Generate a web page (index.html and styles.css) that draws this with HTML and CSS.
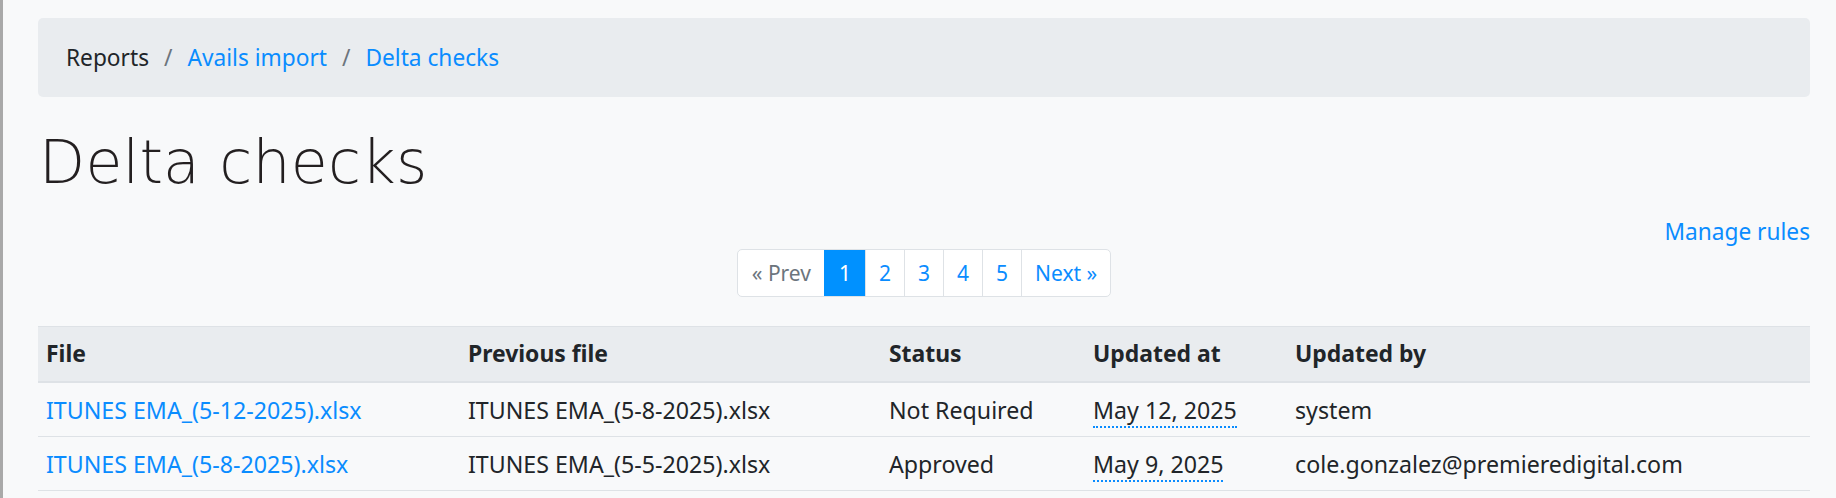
FILE: index.html
```html
<!DOCTYPE html>
<html lang="en">
<head>
<meta charset="utf-8">
<title>Delta checks</title>
<link rel="stylesheet" href="styles.css">
</head>
<body>
<div class="page">
  <nav class="breadcrumb">
    <span class="crumb">Reports</span>
    <a class="crumb" href="#">Avails import</a>
    <a class="crumb" href="#">Delta checks</a>
  </nav>

  <h1 class="title">Delta checks</h1>

  <div class="actions">
    <a href="#" class="action-link">Manage rules</a>
  </div>

  <div class="pager-wrap">
    <ul class="pager">
      <li><span class="pg disabled">« Prev</span></li>
      <li><span class="pg active">1</span></li>
      <li><a class="pg" href="#">2</a></li>
      <li><a class="pg" href="#">3</a></li>
      <li><a class="pg" href="#">4</a></li>
      <li><a class="pg" href="#">5</a></li>
      <li><a class="pg" href="#">Next »</a></li>
    </ul>
  </div>

  <table class="grid">
    <colgroup>
      <col class="c-file"><col class="c-prev"><col class="c-status"><col class="c-at"><col class="c-by">
    </colgroup>
    <thead>
      <tr><th>File</th><th>Previous file</th><th>Status</th><th>Updated at</th><th>Updated by</th></tr>
    </thead>
    <tbody>
      <tr>
        <td><a href="#">ITUNES EMA_(5-12-2025).xlsx</a></td>
        <td>ITUNES EMA_(5-8-2025).xlsx</td>
        <td>Not Required</td>
        <td><span class="date" title="May 12, 2025">May 12, 2025</span></td>
        <td>system</td>
      </tr>
      <tr>
        <td><a href="#">ITUNES EMA_(5-8-2025).xlsx</a></td>
        <td>ITUNES EMA_(5-5-2025).xlsx</td>
        <td>Approved</td>
        <td><span class="date" title="May 9, 2025">May 9, 2025</span></td>
        <td>cole.gonzalez@premieredigital.com</td>
      </tr>
    </tbody>
  </table>
</div>
</body>
</html>
```
FILE: styles.css
```css
html, body {
  margin: 0;
  padding: 0;
}
body {
  background: #f8f9fa;
  color: #212529;
  font-family: "Noto Sans", "Open Sans", sans-serif;
  font-size: 22.7px;
  line-height: 1.5;
  border-left: 3px solid #a9a9a9;
  min-height: 498px;
  box-sizing: border-box;
}
a {
  color: #0a8cff;
  text-decoration: none;
}
.page {
  margin: 0 26px 0 35px;
  padding-top: 18px;
}

/* breadcrumb */
.breadcrumb {
  display: flex;
  align-items: center;
  background: #e9ecef;
  border-radius: 5px;
  padding: 22px 28px;
  line-height: 35px;
}
.crumb + .crumb::before {
  content: "/";
  color: #6c757d;
  padding: 0 15px;
  display: inline-block;
}

/* heading */
.title {
  margin: 29px 0 0;
  font-family: "DejaVu Sans", "Inter", sans-serif;
  font-weight: 200;
  font-size: 60px;
  letter-spacing: 0.2px;
  line-height: 72px;
  color: #231f20;
  padding-left: 1px;
}

/* actions */
.actions {
  margin-top: 17px;
  display: flex;
  justify-content: flex-end;
  line-height: 34px;
}

/* pagination */
.pager-wrap {
  display: flex;
  justify-content: center;
}
.pager {
  display: flex;
  list-style: none;
  margin: 0;
  padding: 0;
  border: 1px solid #dee2e6;
  border-radius: 5px;
  overflow: hidden;
  background: #fff;
  font-size: 21px;
  line-height: 46px;
}
.pager li + li .pg {
  border-left: 1px solid #dee2e6;
}
.pg {
  display: block;
  padding: 0 13px;
  color: #0a8cff;
}
.pg.disabled {
  color: #6c757d;
  padding: 0 13px 0 14px;
}
.pg.active {
  background: #0091ff;
  color: #fff;
  border-left-color: #0091ff !important;
  padding: 0 14px;
}

/* table */
.grid {
  margin-top: 29px;
  width: 100%;
  border-collapse: collapse;
  table-layout: fixed;
  font-size: 23.2px;
}
.c-file { width: 422px; }
.c-prev { width: 421px; }
.c-status { width: 204px; }
.c-at { width: 202px; }
.grid th,
.grid td {
  text-align: left;
  padding: 9.5px 8px;
  line-height: 34px;
  white-space: nowrap;
}
.grid thead th {
  background: #e9ecef;
  font-weight: 700;
  font-size: 22.9px;
  border-top: 1px solid #dee2e6;
  border-bottom: 2px solid #dee2e6;
  padding-top: 10px;
  padding-bottom: 10px;
}
.grid tbody td {
  border-bottom: 1px solid #dee2e6;
}
.date {
  border-bottom: 2px dotted #0a8cff;
}
```
